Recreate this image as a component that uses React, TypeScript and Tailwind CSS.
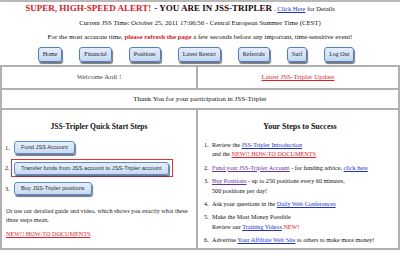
import React from 'react';

const serif = { fontFamily: '"Liberation Serif", "Times New Roman", serif' };
const sans = { fontFamily: '"Liberation Sans", Arial, sans-serif' };

const navItems = ['Home', 'Financial', 'Positions', 'Latest Restart', 'Referrals', 'Surf', 'Log Out'];

function NavButton({ label }: { label: string }) {
  return (
    <div className="h-[15px] px-[4px] flex items-center rounded-[3px] border border-[#4f7fc8] bg-gradient-to-b from-[#e4eefb] to-[#c5d9f3] shadow-[1px_2px_1px_rgba(60,60,80,0.7)] text-[6px] text-[#222] whitespace-nowrap">
      {label}
    </div>
  );
}

function StepButton({ label }: { label: string }) {
  return (
    <div
      style={sans}
      className="h-[13px] px-[6px] inline-flex items-center rounded-[3px] border border-[#5b8bd0] bg-gradient-to-b from-[#e6effb] to-[#c8dbf4] shadow-[1px_2px_1px_rgba(60,60,80,0.7)] text-[5.7px] text-[#333] whitespace-nowrap"
    >
      {label}
    </div>
  );
}

function Link({ children, visited, red }: { children: React.ReactNode; visited?: boolean; red?: boolean }) {
  const color = red ? 'text-[#e0202a]' : visited ? 'text-[#663399]' : 'text-[#2233cc]';
  return <span className={`${color} underline`}>{children}</span>;
}

function Step({ n, children }: { n: number; children: React.ReactNode }) {
  return (
    <div className="flex">
      <span className="w-[8px] shrink-0">{n}.</span>
      <div>{children}</div>
    </div>
  );
}

export default function App() {
  return (
    <div style={serif} className="w-[400px] h-[257px] bg-white overflow-hidden border-t-2 border-[#b8b8b8] text-[#111]">
      {/* header */}
      <div className="h-[63px] flex flex-col items-center">
        <div className="h-[14px] mr-[40px] flex items-center whitespace-nowrap">
          <span className="text-[9px] font-bold text-[#d4202a]">SUPER, HIGH-SPEED ALERT!</span>
          <span className="text-[9px] font-bold text-[#1a0a0a] ml-[3px]">- YOU ARE IN JSS-TRIPLER</span>
          <span className="text-[6.5px] ml-[2px]">
            . <Link>Click Here</Link> for Details
          </span>
        </div>
        <div className="mt-[3px] h-[9px] flex items-center text-[6.8px] whitespace-nowrap">
          Current JSS Time: October 25, 2011 17:06:56 - Central European Summer Time (CEST)
        </div>
        <div className="mt-[5px] h-[9px] flex items-center text-[6.9px] whitespace-nowrap">
          <span>
            For the most accurate time, <span className="text-[#d4202a] font-bold">please refresh the page</span> a few seconds before any important, time-sensitive event!
          </span>
        </div>
        <div className="mt-[5px] mr-[8px] flex gap-[17px]">
          {navItems.map((n) => (
            <NavButton key={n} label={n} />
          ))}
        </div>
      </div>

      {/* table */}
      <div className="border-t-2 border-l-2 border-r-2 border-[#b0b0b0] text-[7px]">
        <div className="flex h-[23px] border-b-2 border-[#b0b0b0]">
          <div className="w-[196px] border-r-2 border-[#b0b0b0] flex items-center justify-center text-[#444]">
            Welcome Ardi !
          </div>
          <div className="flex-1 flex items-center justify-center">
            <Link red>Latest JSS-Tripler Update</Link>
          </div>
        </div>
        <div className="h-[20px] flex items-center justify-center border-b-2 border-[#b0b0b0]">
          Thank You for your participation in JSS-Tripler
        </div>
        <div className="flex h-[140px] border-b-2 border-[#b0b0b0] text-[6.2px]">
          {/* left column */}
          <div className="w-[196px] border-r-2 border-[#b0b0b0] px-[3px]">
            <div className="mt-[12px] h-[10px] flex items-center justify-center text-[7.6px] font-bold">
              JSS-Tripler Quick Start Steps
            </div>
            <div className="mt-[9px] flex items-center gap-[4px]">
              <span className="w-[5px]">1.</span>
              <StepButton label="Fund JSS Account" />
            </div>
            <div className="mt-[5px] flex items-center">
              <span className="w-[5px]">2.</span>
              <div className="ml-[1px] h-[18px] border border-[#e03038] flex items-center pl-[2px] pr-[3px]">
                <StepButton label="Transfer funds from JSS account to JSS-Tripler account" />
              </div>
            </div>
            <div className="mt-[5px] flex items-center gap-[4px]">
              <span className="w-[5px]">3.</span>
              <StepButton label="Buy JSS-Tripler positions" />
            </div>
            <div className="mt-[11px] leading-[9px] text-[#222] pl-[1px]">
              Or use our detailed guide and video, which shows you exactly what these three steps mean.
            </div>
            <div className="mt-[5px] pl-[1px]">
              <Link red>NEW!! HOW-TO DOCUMENTS</Link>
            </div>
          </div>
          {/* right column */}
          <div className="flex-1 pl-[6px] pr-[2px]">
            <div className="mt-[12px] h-[10px] flex items-center justify-center text-[8px] font-bold">
              Your Steps to Success
            </div>
            <div className="mt-[8px] flex flex-col gap-[4px] leading-[9.4px] whitespace-nowrap">
              <Step n={1}>
                Review the <Link>JSS-Tripler Introduction</Link>
                <br />
                and the <Link red>NEW!! HOW-TO DOCUMENTS</Link>
              </Step>
              <Step n={2}>
                <Link visited>Fund your JSS-Tripler Account</Link> - for funding advice, <Link>click here</Link>
              </Step>
              <Step n={3}>
                <Link visited>Buy Positions</Link> - up to 250 positions every 60 minutes,
                <br />
                500 positions per day!
              </Step>
              <Step n={4}>
                Ask your questions in the <Link>Daily Web Conferences</Link>
              </Step>
              <Step n={5}>
                Make the Most Money Possible
                <br />
                Review our <Link>Training Videos</Link> <span className="text-[#e0202a]">NEW!</span>
              </Step>
              <Step n={6}>
                Advertise <Link>Your Affiliate Web Site</Link> to others to make more money!
              </Step>
            </div>
          </div>
        </div>
      </div>
    </div>
  );
}
